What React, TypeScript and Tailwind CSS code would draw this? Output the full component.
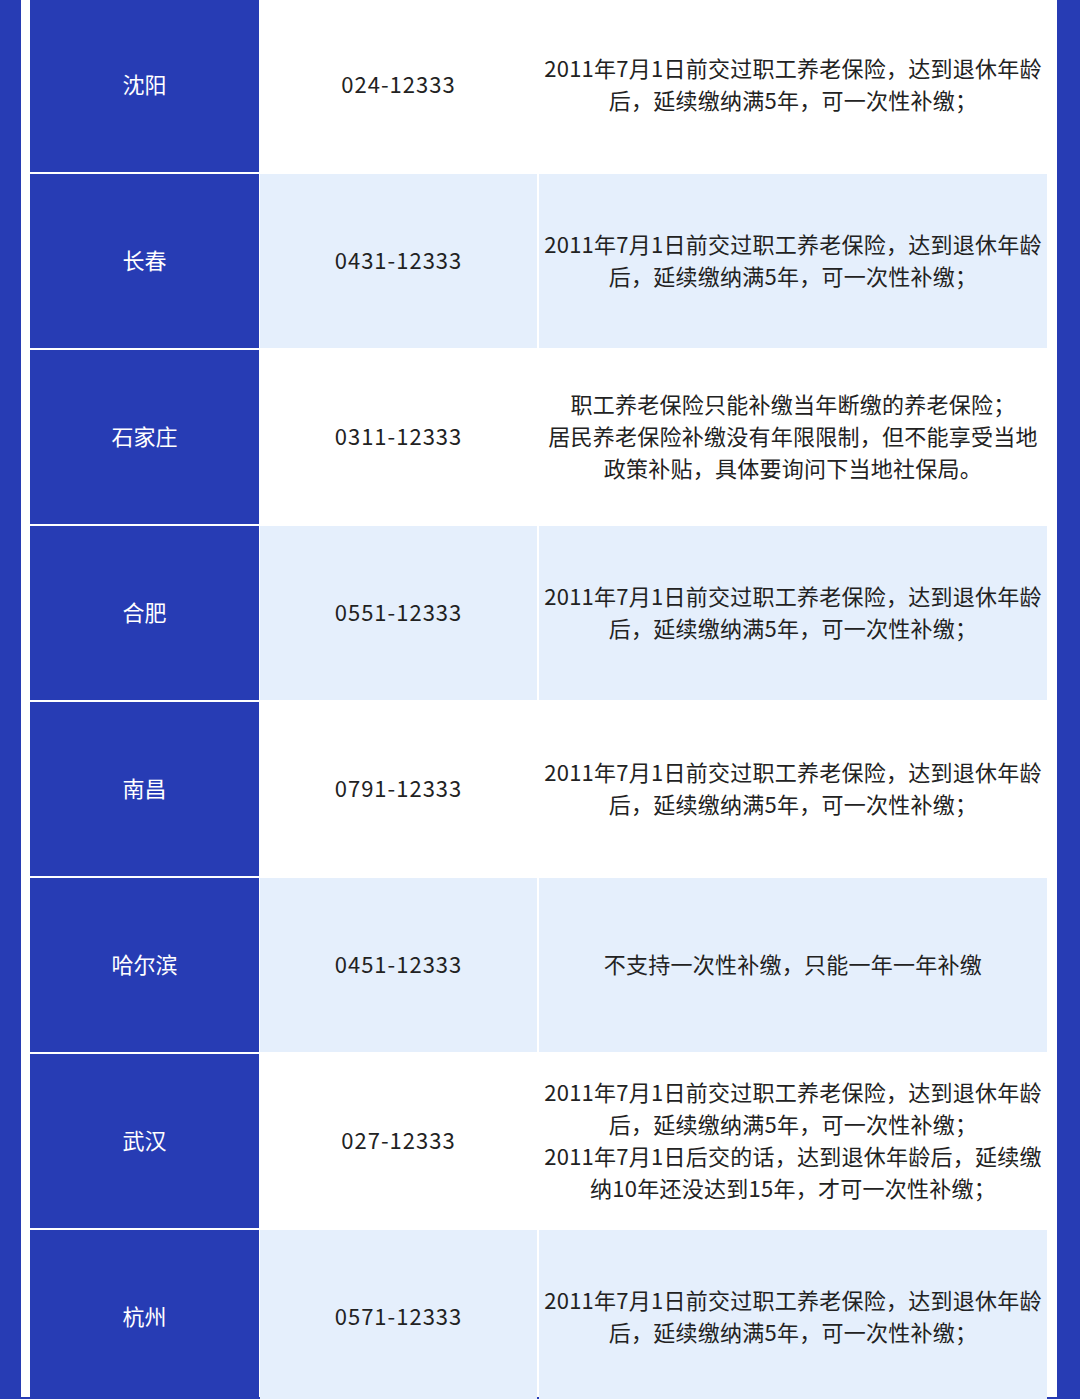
import React from 'react';

type Row = {
  city: string;
  phone: string;
  lines: string[];
};

const STD = ['2011年7月1日前交过职工养老保险，达到退休年龄', '后，延续缴纳满5年，可一次性补缴；'];

const rows: Row[] = [
  { city: '沈阳', phone: '024-12333', lines: STD },
  { city: '长春', phone: '0431-12333', lines: STD },
  {
    city: '石家庄',
    phone: '0311-12333',
    lines: ['职工养老保险只能补缴当年断缴的养老保险；', '居民养老保险补缴没有年限限制，但不能享受当地', '政策补贴，具体要询问下当地社保局。'],
  },
  { city: '合肥', phone: '0551-12333', lines: STD },
  { city: '南昌', phone: '0791-12333', lines: STD },
  { city: '哈尔滨', phone: '0451-12333', lines: ['不支持一次性补缴，只能一年一年补缴'] },
  {
    city: '武汉',
    phone: '027-12333',
    lines: [...STD, '2011年7月1日后交的话，达到退休年龄后，延续缴', '纳10年还没达到15年，才可一次性补缴；'],
  },
  { city: '杭州', phone: '0571-12333', lines: STD },
];

function TableRow({ row, shaded }: { row: Row; shaded: boolean }) {
  const cell = shaded ? 'bg-[#e5effc]' : 'bg-white';
  return (
    <div className="flex h-[174px] shrink-0">
      <div className="w-[229px] shrink-0 bg-[#273cb4] pb-[4px] flex items-center justify-center text-white text-[22px] leading-[32px]">
        {row.city}
      </div>
      <div className={`ml-[1px] w-[277px] shrink-0 ${cell} pb-[4px] flex items-center justify-center text-[#222] text-[22px] leading-[32px] tracking-[1px]`}>
        {row.phone}
      </div>
      <div className={`ml-[2px] flex-1 ${cell} pb-[4px] flex flex-col items-center justify-center text-[#222] text-[22px] leading-[32px] tracking-[0.25px] whitespace-nowrap`}>
        {row.lines.map((l, i) => (
          <div key={i}>{l}</div>
        ))}
      </div>
    </div>
  );
}

export default function App() {
  return (
    <div
      className="w-[1080px] h-[1399px] overflow-hidden bg-[#273cb4] pl-[21px] pr-[23px]"
      style={{ fontFamily: '"Noto Sans CJK SC", "Noto Sans", sans-serif' }}
    >
      <div className="h-full bg-white pl-[9px] pr-[10px]">
        <div className="-mt-[2px] flex flex-col gap-[2px]">
          {rows.map((r, i) => (
            <TableRow key={r.city} row={r} shaded={i % 2 === 1} />
          ))}
        </div>
      </div>
    </div>
  );
}
